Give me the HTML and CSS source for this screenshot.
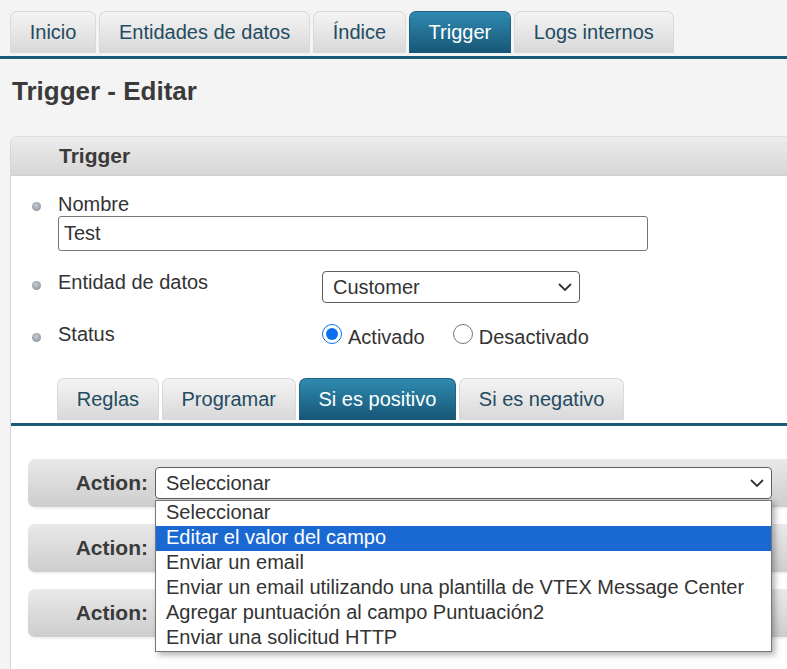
FILE: index.html
```html
<!DOCTYPE html>
<html lang="es">
<head>
    <meta charset="UTF-8">
    <meta name="viewport" content="width=device-width, initial-scale=1.0">
    <link rel="stylesheet" href="styles.css">
</head>
<body>

    <ul class="tabs main-tabs">
        <li class="tab">Inicio</li>
        <li class="tab">Entidades de datos</li>
        <li class="tab">Índice</li>
        <li class="tab active">Trigger</li>
        <li class="tab">Logs internos</li>
    </ul>

    <h1 class="page-title">Trigger - Editar</h1>

    <div class="panel">
        <div class="panel-head">Trigger</div>
        <div class="panel-body">

            <ul class="fields">
                <li class="field field-stack">
                    <label>Nombre</label>
                    <div class="input">Test</div>
                </li>
                <li class="field">
                    <label>Entidad de datos</label>
                    <div class="select select-entity">
                        <span>Customer</span>
                        <svg class="chevron" width="14" height="8" viewBox="0 0 14 8"><path d="M1 1 L7 7 L13 1" fill="none" stroke="#333" stroke-width="1.8"/></svg>
                    </div>
                </li>
                <li class="field field-status">
                    <label>Status</label>
                    <div class="radios">
                        <label class="radio"><input type="radio" name="status" checked><span>Activado</span></label>
                        <label class="radio"><input type="radio" name="status"><span>Desactivado</span></label>
                    </div>
                </li>
            </ul>

            <ul class="tabs sub-tabs">
                <li class="tab">Reglas</li>
                <li class="tab">Programar</li>
                <li class="tab active">Si es positivo</li>
                <li class="tab">Si es negativo</li>
            </ul>

            <div class="actions">
                <div class="action-row">
                    <span class="action-label">Action:</span>
                    <div class="select-wrap">
                        <div class="select">
                            <span>Seleccionar</span>
                            <svg class="chevron" width="14" height="8" viewBox="0 0 14 8"><path d="M1 1 L7 7 L13 1" fill="none" stroke="#333" stroke-width="1.8"/></svg>
                        </div>
                        <ul class="dropdown">
                            <li>Seleccionar</li>
                            <li class="selected">Editar el valor del campo</li>
                            <li>Enviar un email</li>
                            <li>Enviar un email utilizando una plantilla de VTEX Message Center</li>
                            <li>Agregar puntuación al campo Puntuación2</li>
                            <li>Enviar una solicitud HTTP</li>
                        </ul>
                    </div>
                </div>
                <div class="action-row">
                    <span class="action-label">Action:</span>
                </div>
                <div class="action-row">
                    <span class="action-label">Action:</span>
                </div>
            </div>

        </div>
    </div>

</body>
</html>
```

FILE: styles.css
```css
body {
    margin: 0;
    background-color: #f4f4f4;
    font-family: "Liberation Sans", Arial, sans-serif;
    font-size: 20px;
    color: #333;
    overflow: hidden;
}

/* tabs */

.tabs {
    list-style: none;
    margin: 0;
    display: flex;
    gap: 3px;
    border-bottom: 3px solid #1b5a77;
}

.main-tabs {
    padding: 11px 0 0 10px;
}

.sub-tabs {
    padding: 0 0 0 46px;
    margin-top: 29px;
}

.tab {
    height: 41px;
    line-height: 41px;
    padding: 0 18.75px;
    margin-bottom: 3px;
    border: 1px solid #d9d9d9;
    border-bottom: none;
    border-radius: 7px 7px 0 0;
    background: linear-gradient(#f4f4f4, #d8d8d8);
    color: #234b61;
}

.tab.active {
    background: linear-gradient(#2f8ab0, #175676);
    border-color: #1d6282;
    color: #fff;
}

.page-title {
    margin: 18px 0 30px 12px;
    font-size: 26px;
    line-height: 29px;
    color: #3a3a3a;
}

/* panel */

.panel {
    margin: 0 -10px 0 10px;
    border-left: 1px solid #d6d6d6;
    border-top: 1px solid #dedede;
    border-radius: 7px 0 0 0;
    background-color: #fff;
}

.panel-head {
    height: 38px;
    line-height: 38px;
    padding-left: 48px;
    font-size: 21px;
    font-weight: bold;
    color: #3a3a3a;
    background: linear-gradient(#ececec, #d6d6d6);
    border-bottom: 1px solid #cfcfcf;
    border-radius: 6px 0 0 0;
}

.panel-body {
    padding: 17px 0 40px;
}

/* fields */

.fields {
    list-style: none;
    margin: 0;
    padding: 0;
}

.field {
    position: relative;
    display: flex;
    align-items: flex-start;
    padding-left: 47px;
    margin-bottom: 20px;
}

.field::before {
    content: "";
    position: absolute;
    left: 21px;
    top: 10px;
    width: 9px;
    height: 9px;
    border-radius: 50%;
    background: radial-gradient(circle at 45% 40%, #c9ced3 0, #a4acb4 45%, #7f8993 100%);
}

.field-stack::before {
    top: 9px;
}

.field > label {
    width: 264px;
    line-height: 23px;
}

.field-stack {
    flex-direction: column;
}

.field-status {
    margin-bottom: 0;
}

.input {
    width: 583px;
    height: 33px;
    line-height: 33px;
    padding-left: 5px;
    border: 1px solid #767676;
    border-radius: 3px;
    background: #fff;
}

.select {
    display: flex;
    align-items: center;
    justify-content: space-between;
    height: 30px;
    padding: 0 7px 0 10px;
    border: 1px solid #606060;
    border-radius: 4px;
    background: #fff;
}

.select-entity {
    width: 239px;
}

.chevron {
    display: block;
}

/* radios */

.radios {
    display: flex;
    gap: 28px;
}

.radio {
    display: flex;
    align-items: flex-start;
}

.radio input {
    width: 20px;
    height: 20px;
    margin: 1px 6px 0 0;
    accent-color: #0a6ff0;
}

.radio span {
    line-height: 23px;
    padding-top: 3px;
}

/* actions */

.actions {
    padding: 33px 0 0 17px;
}

.action-row {
    display: flex;
    align-items: center;
    height: 48px;
    margin-bottom: 17px;
    border-radius: 7px 0 0 7px;
    background: linear-gradient(#e9e9e9, #cdcdcd);
    box-shadow: 0 2px 2px rgba(0, 0, 0, 0.06);
}

.action-label {
    width: 120px;
    text-align: right;
    font-size: 21px;
    font-weight: bold;
    color: #3a3a3a;
}

.select-wrap {
    position: relative;
    width: 617px;
    margin-left: 7px;
}

.dropdown {
    position: absolute;
    left: 0;
    top: 33px;
    width: 615px;
    margin: 0;
    padding: 0;
    list-style: none;
    border: 1px solid #777;
    background: #fff;
    box-shadow: 3px 3px 6px rgba(0, 0, 0, 0.3);
    z-index: 2;
}

.dropdown li {
    height: 25px;
    line-height: 23px;
    padding-left: 10px;
    white-space: nowrap;
}

.dropdown li.selected {
    background-color: #1a69d3;
    color: #fff;
}
```
